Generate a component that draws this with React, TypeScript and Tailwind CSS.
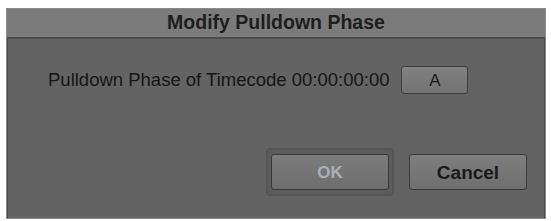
export default function App() {
  return (
    <div className="h-[221px] w-[551px] bg-white pl-[6px] pt-[8px] font-['Liberation_Sans',Arial,sans-serif]">
      <div className="flex h-[211px] w-[540px] flex-col border border-[#8a8a8a] bg-[#636363] shadow-[inset_1px_0_0_#4a4a4a,inset_-1px_0_0_#4a4a4a]">
        <div className="flex h-[30px] items-center justify-center border-b-2 border-[#4b4b4b] bg-[#7b7b7b]">
          <span className="text-[19.5px] leading-none font-bold text-[#1e1e1e]">
            Modify Pulldown Phase
          </span>
        </div>

        <div className="mt-[27px] flex items-center pl-[41px]">
          <span className="text-[18.5px] leading-none text-[#161616]">
            Pulldown Phase of Timecode 00:00:00:00
          </span>
          <button
            type="button"
            className="ml-[12px] flex h-[28px] w-[67px] items-center justify-center rounded-[3px] border border-[#3f3f3f] bg-gradient-to-b from-[#818181] to-[#737373] text-[17px] leading-none text-[#1a1a1a]"
          >
            A
          </button>
        </div>

        <div className="mt-[54px] flex items-center justify-end pr-[18px]">
          <div className="rounded-[4px] border-2 border-[#555555] bg-[#5c5c5c] px-[3px] py-[4px]">
            <button
              type="button"
              className="flex h-[36px] w-[118px] items-center justify-center rounded-[3px] border border-[#3a3a3a] bg-gradient-to-b from-[#7c7c7c] to-[#6e6e6e] text-[17px] leading-none font-bold text-[#a8afbd]"
            >
              OK
            </button>
          </div>
          <button
            type="button"
            className="ml-[15px] flex h-[36px] w-[118px] items-center justify-center rounded-[3px] border border-[#3a3a3a] bg-gradient-to-b from-[#7e7e7e] to-[#6f6f6f] text-[19px] leading-none font-bold text-[#1a1a1a]"
          >
            Cancel
          </button>
        </div>
      </div>
    </div>
  );
}
